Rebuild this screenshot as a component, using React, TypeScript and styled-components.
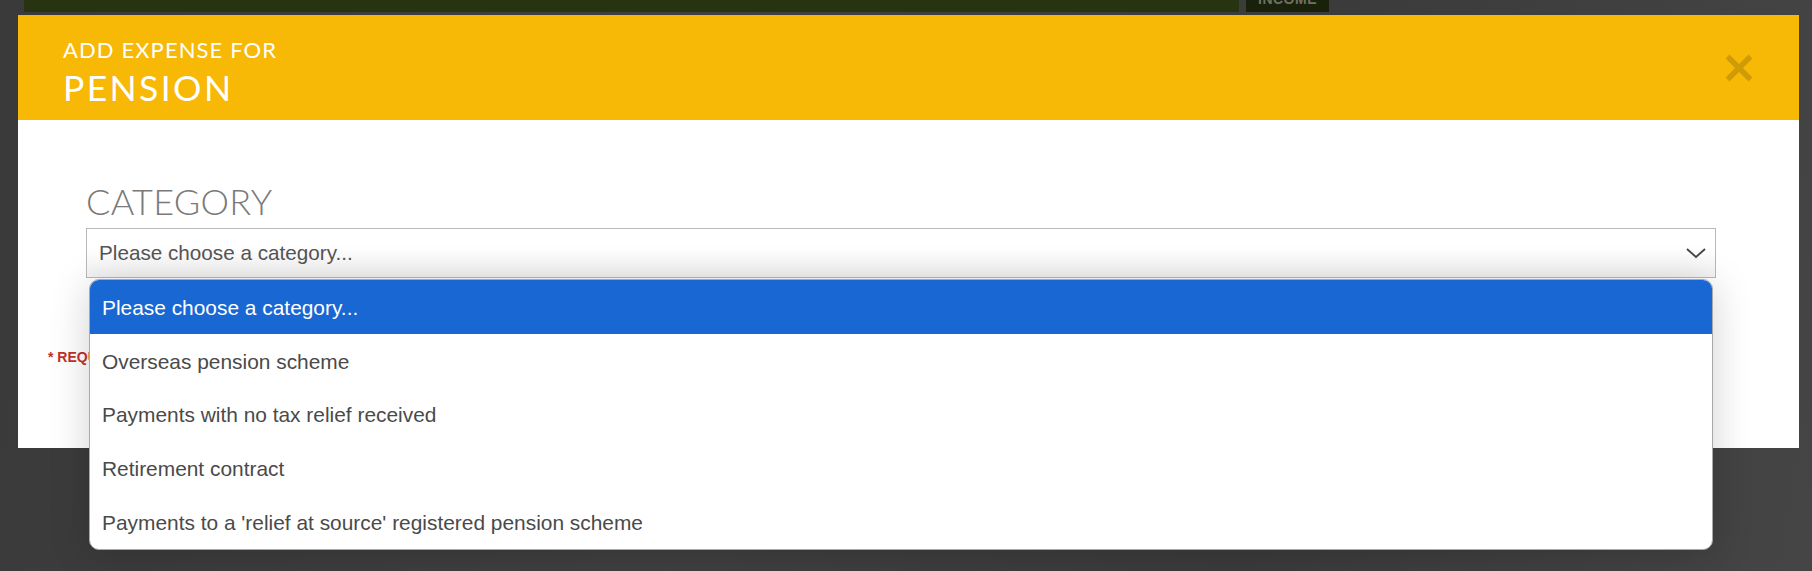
import React from "react";
import styled, { createGlobalStyle } from "styled-components";

const GlobalStyle = createGlobalStyle`
  html, body {
    margin: 0;
    padding: 0;
  }
  body {
    background: #3d3d3d;
    font-family: "Liberation Sans", Arial, sans-serif;
  }
`;

const Page = styled.div`
  height: 571px;
  overflow: hidden;
  background: linear-gradient(100deg, #3a3a3a 0%, #404040 40%, #3b3b3b 70%, #454545 100%);
`;

const TopStrip = styled.div`
  display: flex;
  gap: 7px;
  height: 12px;
  padding-left: 24px;
`;

const GreenBar = styled.div`
  width: 1215px;
  background: #283311;
`;

const IncomeTab = styled.div`
  width: 83px;
  background: #19210a;
  overflow: hidden;
  display: flex;
  justify-content: center;
`;

const IncomeText = styled.span`
  margin-top: -9px;
  font-family: "Liberation Sans", Arial, sans-serif;
  font-weight: 700;
  font-size: 14px;
  line-height: 16px;
  color: #6e7262;
  letter-spacing: 0.5px;
`;

const Modal = styled.div`
  margin: 3px 13px 0 18px;
  background: #ffffff;
`;

const Header = styled.div`
  height: 105px;
  box-sizing: border-box;
  background: #f8b806;
  padding: 0 45px;
  display: flex;
  align-items: center;
  justify-content: space-between;
`;

const TitleBlock = styled.div`
  display: flex;
  flex-direction: column;
  color: #ffffff;
  font-family: Lato, "Open Sans", sans-serif;
  margin-top: 14px;
`;

const SubTitle = styled.div`
  font-size: 22px;
  line-height: 26px;
  font-weight: 400;
  letter-spacing: 1.1px;
`;

const Title = styled.div`
  font-size: 35.5px;
  line-height: 49px;
  font-weight: 400;
  letter-spacing: 2.4px;
`;

const CloseButton = styled.button`
  border: none;
  background: none;
  padding: 0;
  width: 30px;
  height: 30px;
  color: #cf9b06;
  cursor: pointer;
  display: flex;
`;

const Body = styled.div`
  position: relative;
  height: 328px;
  box-sizing: border-box;
  padding: 61px 83px 0 68px;
`;

const Label = styled.div`
  font-family: Lato, "Open Sans", sans-serif;
  font-weight: 300;
  font-size: 36px;
  line-height: 40px;
  color: #7a7a7a;
  letter-spacing: 0.3px;
  margin-bottom: 7px;
`;

const Field = styled.div`
  position: relative;
`;

const SelectBox = styled.div`
  height: 50px;
  box-sizing: border-box;
  border: 1px solid #b8b8b8;
  background: linear-gradient(#ffffff 40%, #f3f3f3 100%);
  display: flex;
  align-items: center;
  justify-content: space-between;
  padding: 0 8px 0 12px;
  font-size: 20.7px;
  color: #555555;
`;

const Menu = styled.ul`
  position: absolute;
  top: 51px;
  left: 3px;
  right: 3px;
  margin: 0;
  padding: 0;
  list-style: none;
  background: #ffffff;
  border: 1px solid #a9a9a9;
  border-radius: 10px;
  overflow: hidden;
  box-shadow: 0 4px 40px rgba(0, 0, 0, 0.18);
  z-index: 2;
`;

const Option = styled.li<{ $active?: boolean }>`
  height: 53.8px;
  display: flex;
  align-items: center;
  padding: 2px 12px 0;
  box-sizing: border-box;
  font-size: 20.9px;
  color: ${(p) => (p.$active ? "#ffffff" : "#4a4a4a")};
  background: ${(p) => (p.$active ? "#1967d3" : "transparent")};
`;

const Required = styled.div`
  position: absolute;
  left: 30px;
  top: 229px;
  font-size: 14px;
  font-weight: 700;
  color: #c0302a;
`;

const options = [
  "Please choose a category...",
  "Overseas pension scheme",
  "Payments with no tax relief received",
  "Retirement contract",
  "Payments to a 'relief at source' registered pension scheme",
];

export default function App() {
  return (
    <Page>
      <GlobalStyle />
      <TopStrip>
        <GreenBar />
        <IncomeTab>
          <IncomeText>INCOME</IncomeText>
        </IncomeTab>
      </TopStrip>
      <Modal>
        <Header>
          <TitleBlock>
            <SubTitle>ADD EXPENSE FOR</SubTitle>
            <Title>PENSION</Title>
          </TitleBlock>
          <CloseButton aria-label="Close">
            <svg width="30" height="30" viewBox="0 0 30 30">
              <path d="M3.5 3.5 L26.5 26.5 M26.5 3.5 L3.5 26.5" stroke="currentColor" strokeWidth="5.5" strokeLinecap="butt" />
            </svg>
          </CloseButton>
        </Header>
        <Body>
          <Label>CATEGORY</Label>
          <Field>
            <SelectBox>
              <span>Please choose a category...</span>
              <svg width="22" height="12" viewBox="0 0 22 12">
                <path d="M2 2 L11 10 L20 2" fill="none" stroke="#444" strokeWidth="1.8" />
              </svg>
            </SelectBox>
            <Menu>
              {options.map((o, i) => (
                <Option key={o} $active={i === 0}>
                  {o}
                </Option>
              ))}
            </Menu>
          </Field>
          <Required>* REQUIRED FIELDS</Required>
        </Body>
      </Modal>
    </Page>
  );
}
